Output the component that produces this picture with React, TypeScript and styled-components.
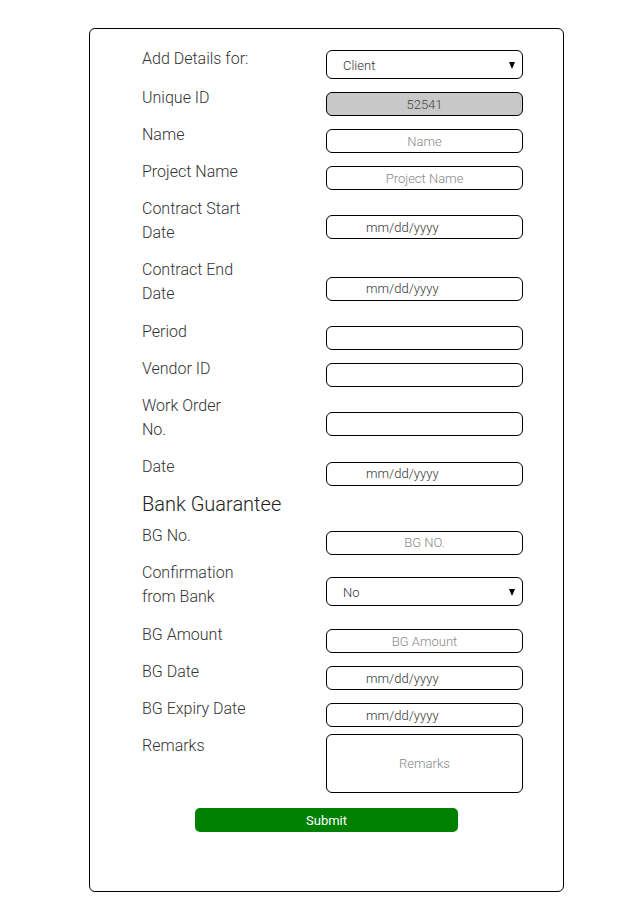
import React from "react";
import styled, { createGlobalStyle } from "styled-components";

const GlobalStyle = createGlobalStyle`
  html, body { margin: 0; padding: 0; background: #fff; }
  body { font-family: Roboto, "Liberation Sans", Arial, sans-serif; }
  * { box-sizing: border-box; }
`;

const Page = styled.div`
  padding: 28px 0 20px 89px;
`;

const Card = styled.form`
  width: 475px;
  border: 1px solid #000;
  border-radius: 6px;
  padding: 9px 0 59px 52px;
`;

const Row = styled.div<{ $top?: boolean }>`
  display: flex;
  align-items: ${(p) => (p.$top ? "flex-start" : "center")};
`;

const Label = styled.label<{ $lines?: number }>`
  width: 184px;
  font-size: 16px;
  font-weight: 300;
  color: #333;
  line-height: 24px;
  padding: ${(p) => (p.$lines === 2 ? "6.5px 0 7px" : "6.5px 0")};
  flex-shrink: 0;
`;

const Field = styled.div<{ $pad: number }>`
  padding-top: ${(p) => p.$pad}px;
  width: 197px;
  position: relative;
`;

const TextInput = styled.input<{ $date?: boolean; $disabled?: boolean }>`
  display: block;
  width: 197px;
  height: 24px;
  border: 1px solid #000;
  border-radius: 6px;
  background: ${(p) => (p.$disabled ? "#c8c8c8" : "#fff")};
  font-family: Roboto, "Liberation Sans", Arial, sans-serif;
  font-size: 13px;
  font-weight: 300;
  color: #444;
  text-align: ${(p) => (p.$date ? "left" : "center")};
  padding: ${(p) => (p.$date ? "0 0 0 39px" : "0 8px")};
  outline: none;
  &::placeholder {
    color: ${(p) => (p.$date ? "#333" : "#888")};
    opacity: 1;
  }
`;

const SelectBox = styled.select`
  display: block;
  width: 197px;
  height: 29px;
  border: 1px solid #000;
  border-radius: 6px;
  background: #fff;
  appearance: none;
  -webkit-appearance: none;
  font-family: Roboto, "Liberation Sans", Arial, sans-serif;
  font-size: 13px;
  font-weight: 300;
  color: #333;
  padding: 2px 0 0 16px;
  outline: none;
`;

const Arrow = styled.span`
  position: absolute;
  right: 8px;
  bottom: 10px;
  width: 0;
  height: 0;
  border-left: 3.5px solid transparent;
  border-right: 3.5px solid transparent;
  border-top: 7px solid #000;
  pointer-events: none;
`;

const TextArea = styled.textarea`
  display: block;
  width: 197px;
  height: 59px;
  border: 1px solid #000;
  border-radius: 6px;
  resize: none;
  font-family: Roboto, "Liberation Sans", Arial, sans-serif;
  font-size: 13px;
  font-weight: 300;
  line-height: 16px;
  text-align: center;
  padding: 21px 8px 0;
  outline: none;
  &::placeholder {
    color: #888;
    opacity: 1;
  }
`;

const Heading = styled.h3`
  margin: 0;
  font-size: 20px;
  font-weight: 300;
  color: #222;
  line-height: 24px;
  padding: 6.5px 0 1.5px;
`;

const SubmitRow = styled.div`
  display: flex;
  padding: 15px 0 0 53px;
`;

const SubmitButton = styled.button`
  width: 263px;
  height: 24px;
  border: none;
  border-radius: 5px;
  background: #008000;
  color: #fff;
  font-family: Roboto, "Liberation Sans", Arial, sans-serif;
  font-size: 13px;
  font-weight: 400;
  cursor: pointer;
`;

type Kind = "text" | "date" | "disabled";

const InputRow: React.FC<{
  label: React.ReactNode;
  lines?: number;
  kind?: Kind;
  placeholder?: string;
  value?: string;
}> = ({ label, lines = 1, kind = "text", placeholder, value }) => (
  <Row>
    <Label $lines={lines}>{label}</Label>
    <Field $pad={13}>
      <TextInput
        type="text"
        $date={kind === "date"}
        $disabled={kind === "disabled"}
        placeholder={kind === "date" ? "mm/dd/yyyy" : placeholder}
        defaultValue={value}
        readOnly={kind === "disabled"}
      />
    </Field>
  </Row>
);

const SelectRow: React.FC<{ label: React.ReactNode; lines?: number; options: string[] }> = ({
  label,
  lines = 1,
  options,
}) => (
  <Row>
    <Label $lines={lines}>{label}</Label>
    <Field $pad={12}>
      <SelectBox>
        {options.map((o) => (
          <option key={o}>{o}</option>
        ))}
      </SelectBox>
      <Arrow />
    </Field>
  </Row>
);

export default function App() {
  return (
    <>
      <GlobalStyle />
      <Page>
        <Card onSubmit={(e) => e.preventDefault()}>
          <SelectRow label="Add Details for:" options={["Client", "Vendor"]} />
          <InputRow label="Unique ID" kind="disabled" value="52541" />
          <InputRow label="Name" placeholder="Name" />
          <InputRow label="Project Name" placeholder="Project Name" />
          <InputRow label={<>Contract Start<br />Date</>} lines={2} kind="date" />
          <InputRow label={<>Contract End<br />Date</>} lines={2} kind="date" />
          <InputRow label="Period" />
          <InputRow label="Vendor ID" />
          <InputRow label={<>Work Order<br />No.</>} lines={2} />
          <InputRow label="Date" kind="date" />
          <Heading>Bank Guarantee</Heading>
          <InputRow label="BG No." placeholder="BG NO." />
          <SelectRow label={<>Confirmation<br />from Bank</>} lines={2} options={["No", "Yes"]} />
          <InputRow label="BG Amount" placeholder="BG Amount" />
          <InputRow label="BG Date" kind="date" />
          <InputRow label="BG Expiry Date" kind="date" />
          <Row $top>
            <Label>Remarks</Label>
            <Field $pad={7}>
              <TextArea placeholder="Remarks" />
            </Field>
          </Row>
          <SubmitRow>
            <SubmitButton type="submit">Submit</SubmitButton>
          </SubmitRow>
        </Card>
      </Page>
    </>
  );
}
